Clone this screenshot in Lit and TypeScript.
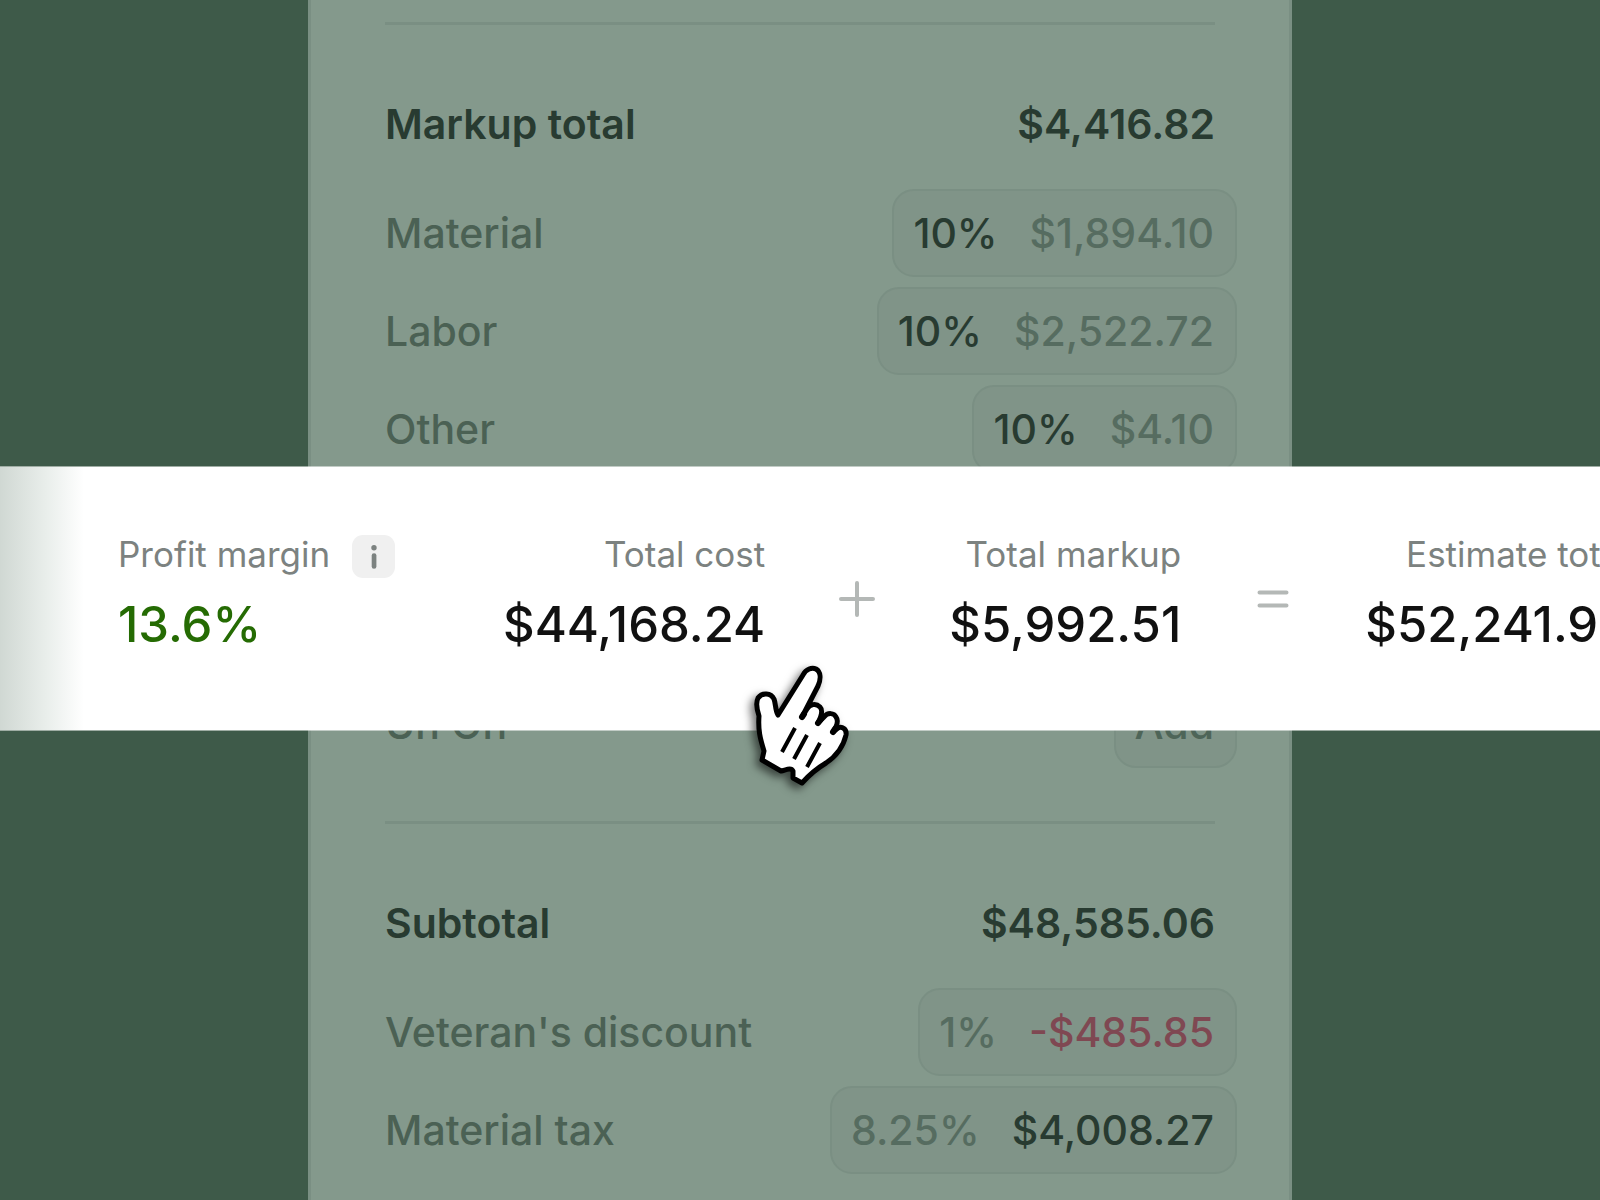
import { LitElement, html, css, nothing } from "lit";
import { customElement, property } from "lit/decorators.js";

interface Line {
  label: string;
  rate?: string;
  amount?: string;
  rateTone?: string;
  amountTone?: string;
}

const MARKUP: Line[] = [
  { label: "Material", rate: "10%", amount: "$1,894.10", rateTone: "strong", amountTone: "soft" },
  { label: "Labor", rate: "10%", amount: "$2,522.72", rateTone: "strong", amountTone: "soft" },
  { label: "Other", rate: "10%", amount: "$4.10", rateTone: "strong", amountTone: "soft" },
];

const ADD_ON: Line = { label: "Un On", amount: "Add" };

const SUBTOTAL: Line[] = [
  { label: "Veteran's discount", rate: "1%", amount: "-$485.85", rateTone: "soft", amountTone: "negative" },
  { label: "Material tax", rate: "8.25%", amount: "$4,008.27", rateTone: "soft", amountTone: "strong" },
];

@customElement("line-row")
class LineRow extends LitElement {
  @property({ attribute: false }) line!: Line;

  static styles = css`
    :host { display: flex; align-items: center; justify-content: space-between; height: 88px; }
    .label { color: #4b6154; }
    .pill {
      display: flex; align-items: center; gap: 32px; box-sizing: border-box; height: 88px;
      margin: 0 -22px 0 0; padding: 0 21px 0 19px; border: 2px solid #7a8f83; border-radius: 22px;
      background: #809488; font: inherit; color: #4e6558; cursor: pointer;
    }
    .strong { color: #283b31; }
    .soft { color: #566c60; }
    .negative { color: #7f4852; }
  `;

  render() {
    const l = this.line;
    return html`
      <span class="label">${l.label}</span>
      <button class="pill" type="button">
        ${l.rate ? html`<span class=${l.rateTone ?? ""}>${l.rate}</span>` : nothing}
        <span class=${l.amountTone ?? ""}>${l.amount}</span>
      </button>
    `;
  }
}

@customElement("summary-bar")
class SummaryBar extends LitElement {
  static styles = css`
    :host { display: block; overflow: hidden; background: #fff; }
    .track { display: flex; align-items: flex-start; width: max-content; padding: 66px 0 0 118px; }
    .item { display: flex; flex-direction: column; align-items: flex-end; gap: 18px; white-space: nowrap; }
    .item.first { align-items: flex-start; width: 278px; margin-right: 107px; }
    .head { display: flex; align-items: center; gap: 22px; height: 42px; font-size: 35px; line-height: 42px; font-weight: 400; color: #7c8280; }
    .value { font-size: 49px; line-height: 64px; font-weight: 500; color: #111; }
    .good { color: #256b03; }
    .info {
      display: grid; flex: none; place-items: center; width: 43px; height: 43px; margin-top: 4px; padding: 0; border: 0;
      border-radius: 11px; background: #f0f0f0; color: #7c8280; cursor: pointer;
    }
    .op { width: 40px; height: 40px; margin: 46px 72px 0; }
    .shade {
      position: absolute; inset: 0 auto 0 0; width: 84px; pointer-events: none;
      background: linear-gradient(90deg, #d0d8d3, #e9eeeb 55%, #fff);
    }
  `;

  render() {
    return html`
      <div class="track">
        <div class="item first">
          <div class="head">
            <span>Profit margin</span>
            <button class="info" type="button" aria-label="About profit margin">
              <svg width="43" height="43" viewBox="0 0 43 43" fill="currentColor">
                <circle cx="22" cy="12.8" r="2.7" /><rect x="19.7" y="18.3" width="4.7" height="15.5" rx="2.3" />
              </svg>
            </button>
          </div>
          <div class="value good">13.6%</div>
        </div>
        <div class="item">
          <div class="head">Total cost</div>
          <div class="value">$44,168.24</div>
        </div>
        <svg class="op" viewBox="0 0 40 40" fill="none" stroke="#b4b8b6" stroke-width="4" stroke-linecap="round" aria-hidden="true">
          <path d="M4 20h32M20 4v32" />
        </svg>
        <div class="item">
          <div class="head">Total markup</div>
          <div class="value">$5,992.51</div>
        </div>
        <svg class="op" viewBox="0 0 40 40" fill="none" stroke="#b4b8b6" stroke-width="4" stroke-linecap="round" aria-hidden="true">
          <path d="M6.5 13.5h27M6.5 26.5h27" />
        </svg>
        <div class="item">
          <div class="head">Estimate total</div>
          <div class="value">$52,241.99</div>
        </div>
      </div>
      <div class="shade"></div>
    `;
  }
}

@customElement("app-root")
class AppRoot extends LitElement {
  static styles = css`
    :host {
      display: block; position: relative; height: 100vh; overflow: hidden; background: #3e5a49;
      font-family: Inter, "Liberation Sans", sans-serif; font-size: 41px; line-height: 52px; font-weight: 450; color: #283b31;
    }
    .sheet {
      box-sizing: border-box; max-width: 984px; min-height: 100%; margin: 0 auto; padding: 22px 74px 0;
      border: solid #7a8f83; border-width: 0 3px; background: #84998c;
    }
    .section { display: flex; flex-direction: column; border-top: 3px solid #7a8f83; padding-bottom: 53px; }
    .title { display: flex; justify-content: space-between; margin: 73px 0 39px; font-size: 41px; line-height: 52px; font-weight: 600; }
    .rows { display: flex; flex-direction: column; gap: 10px; }
    .late { margin-top: 197px; }
    .bar { position: absolute; inset: 467px 0 auto 0; height: 263px; box-shadow: 0 0 0 1px rgb(255 255 255 / 50%); }
    .hand { position: absolute; left: 740px; top: 650px; width: 120px; height: 150px; overflow: visible; filter: drop-shadow(-4px 4px 4px rgb(0 0 0 / 55%)); }
  `;

  render() {
    return html`
      <main class="sheet">
        <section class="section">
          <h2 class="title"><span>Markup total</span><span>$4,416.82</span></h2>
          <div class="rows">
            ${MARKUP.map((l) => html`<line-row .line=${l}></line-row>`)}
            <line-row class="late" .line=${ADD_ON}></line-row>
          </div>
        </section>
        <section class="section">
          <h2 class="title"><span>Subtotal</span><span>$48,585.06</span></h2>
          <div class="rows">${SUBTOTAL.map((l) => html`<line-row .line=${l}></line-row>`)}</div>
        </section>
      </main>
      <summary-bar class="bar"></summary-bar>
      <svg class="hand" viewBox="10 0 120 150" aria-hidden="true" stroke="#000" stroke-width="5" stroke-linejoin="round" stroke-linecap="round">
        <path fill="#fff" d="M48 65 L73 25 C76 19 82 17 86 19 C91 22 91 29 88 36 L72 67 L77 59 C80 54 86 53 90 57 C93 60 92 65 88 73 L94 67 C98 62 104 63 106 67 C109 71 107 76 103 82 L108 78 C112 76 117 79 116 85 C113 98 105 107 96 113 C86 119 80 124 72 133 L63 128 L63 121 C61 117 56 120 51 121 L32 110 L34 101 C30 88 28 80 29 66 C27 60 26 52 28 48 C32 42 41 43 44 49 C46 54 45 60 48 65 Z" />
        <path fill="none" stroke-width="6" d="M72 67L74 64M88 73L91 69M103 82L105 79" />
        <path fill="none" stroke-width="4" stroke-linecap="butt" d="M65 78L52 102M77 85L64 109M90 93L77 117" />
      </svg>
    `;
  }
}
